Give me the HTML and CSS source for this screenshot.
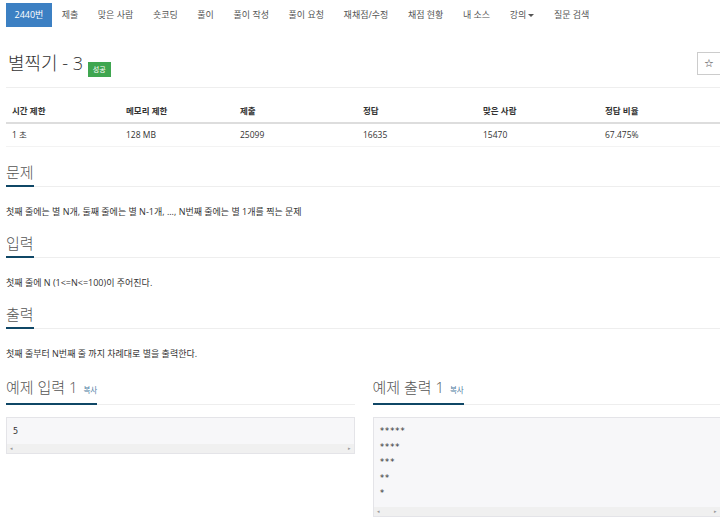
FILE: index.html
```html
<!DOCTYPE html>
<html lang="ko">
<head>
    <meta charset="UTF-8">
    <title>별찍기 - 3</title>
    <link rel="stylesheet" href="styles.css">
</head>
<body>
<div class="page">
    <ul class="tabs">
        <li class="active">2440번</li>
        <li>제출</li>
        <li>맞은 사람</li>
        <li>숏코딩</li>
        <li>풀이</li>
        <li>풀이 작성</li>
        <li>풀이 요청</li>
        <li>재채점/수정</li>
        <li>채점 현황</li>
        <li>내 소스</li>
        <li>강의<span class="caret"></span></li>
        <li>질문 검색</li>
    </ul>

    <div class="title-row">
        <h1 class="title">별찍기 - 3 <span class="badge">성공</span></h1>
        <button class="star-btn">☆</button>
    </div>

    <table class="info">
        <colgroup>
            <col style="width:114px"><col style="width:114px"><col style="width:123px">
            <col style="width:120px"><col style="width:122px"><col>
        </colgroup>
        <thead>
            <tr><th>시간 제한</th><th>메모리 제한</th><th>제출</th><th>정답</th><th>맞은 사람</th><th>정답 비율</th></tr>
        </thead>
        <tbody>
            <tr><td>1 초</td><td>128 MB</td><td>25099</td><td>16635</td><td>15470</td><td>67.475%</td></tr>
        </tbody>
    </table>

    <div class="section">
        <div class="headline"><h2>문제</h2></div>
        <p>첫째 줄에는 별 N개, 둘째 줄에는 별 N-1개, ..., N번째 줄에는 별 1개를 찍는 문제</p>
    </div>
    <div class="section">
        <div class="headline"><h2>입력</h2></div>
        <p>첫째 줄에 N (1&lt;=N&lt;=100)이 주어진다.</p>
    </div>
    <div class="section">
        <div class="headline"><h2>출력</h2></div>
        <p>첫째 줄부터 N번째 줄 까지 차례대로 별을 출력한다.</p>
    </div>

    <div class="samples">
        <div class="sample">
            <div class="headline"><h2>예제 입력 1 <span class="copy">복사</span></h2></div>
            <div class="sample-box">
                <pre>5</pre>
                <div class="hscroll"><span>◂</span><span>▸</span></div>
            </div>
        </div>
        <div class="sample">
            <div class="headline"><h2>예제 출력 1 <span class="copy">복사</span></h2></div>
            <div class="sample-box">
                <pre>*****
****
***
**
*</pre>
                <div class="hscroll"><span>◂</span><span>▸</span></div>
            </div>
        </div>
    </div>
</div>
</body>
</html>
```

FILE: styles.css
```css
/* reset */
*{margin: 0;padding: 0;box-sizing: border-box;}
body{background: #fff;color: #333;font-family: "Open Sans", "Noto Sans CJK KR", sans-serif;font-size: 9px;overflow: hidden;}
.page{width: 715px;margin-left: 6px;}

/* top tabs */
.tabs{display: flex;list-style: none;padding-top: 3px;}
.tabs li{height: 24px;line-height: 24px;padding: 0 9.8px;color: #555;font-size: 9px;}
.tabs li.active{background: #3c80c3;color: #fff;padding: 0 8.5px;}
.caret{display: inline-block;margin-left: 2px;vertical-align: middle;border-top: 3px solid #555;border-left: 3px solid transparent;border-right: 3px solid transparent;}

/* title */
.title-row{display: flex;justify-content: space-between;align-items: center;margin-top: 23px;padding-bottom: 10px;border-bottom: 1px solid #eee;}
.title{font-size: 18px;font-weight: 300;line-height: 26px;color: #333;padding-left: 2px;}
.badge{display: inline-block;background: #3fa650;color: #fff;font-size: 7px;font-weight: 400;line-height: 15px;padding: 0 5px;vertical-align: -2px;}
.star-btn{width: 24px;height: 23px;border: 1px solid #ccc;background: #fff;color: #333;font-size: 11px;font-family: "DejaVu Sans", sans-serif;}

/* info table */
.info{width: 100%;border-collapse: collapse;margin-top: 12px;table-layout: fixed;}
.info th, .info td{text-align: left;padding: 6px;line-height: 10px;font-size: 8.5px;}
.info th{font-weight: 600;border-bottom: 2px solid #ddd;}
.info td{border-bottom: 1px solid #f3f3f3;}

/* sections */
.section{margin-top: 15px;}
.section + .section{margin-top: 14px;}
.headline{border-bottom: 1px solid #eee;}
.headline h2{display: inline-block;font-size: 15px;font-weight: 300;line-height: 20px;padding-bottom: 3px;color: #555;border-bottom: 2px solid #0f4766;margin-bottom: -1px;}
.section p{margin-top: 18px;line-height: 14px;font-size: 9px;color: #333;}
.copy{font-size: 7.5px;font-weight: 400;color: #4f7ea3;margin-left: 2px;}

/* samples */
.samples{display: grid;grid-template-columns: 1fr 1fr;column-gap: 18px;margin-top: 16px;}
.sample-box{margin-top: 12px;background: #f7f7f9;border: 1px solid #e4e4e8;}
.sample-box pre{font-family: "DejaVu Sans Mono", monospace;font-size: 8.5px;line-height: 15.5px;padding: 6px 6px 0;color: #333;}
.hscroll{display: flex;justify-content: space-between;height: 9px;margin-top: 4px;background: #f0f0f0;font-size: 5px;line-height: 9px;color: #999;padding: 0 3px;}
.sample:last-child .hscroll{margin-top: 5px;}
```
